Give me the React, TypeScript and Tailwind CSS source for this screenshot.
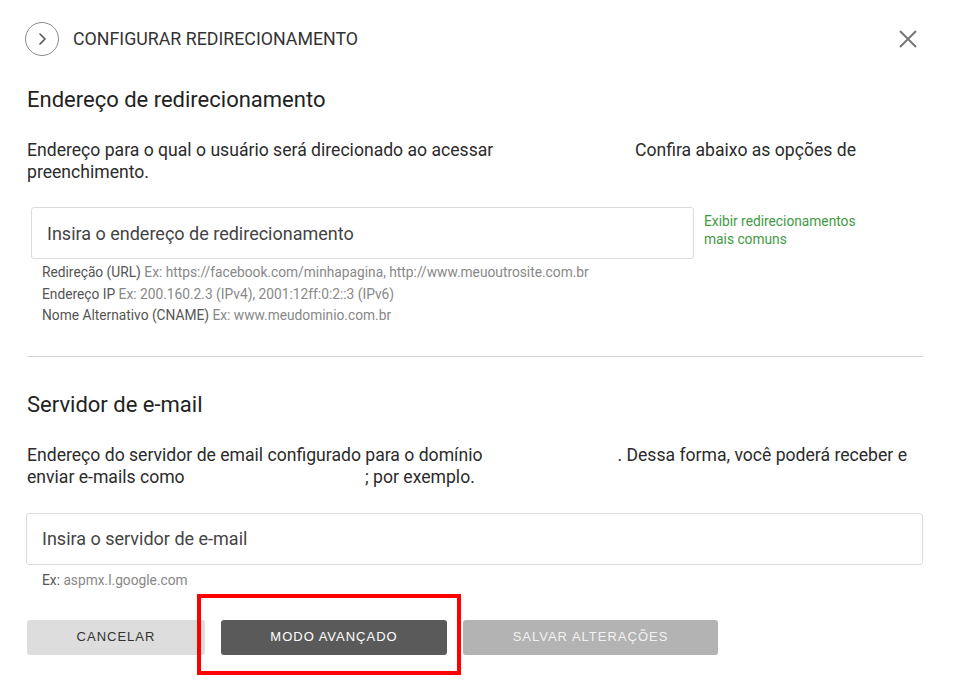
export default function App() {
  return (
    <div className="min-h-screen w-full bg-white font-['Roboto',sans-serif] text-[#333]">
      <div className="pl-[27px] pr-[34px]">
        <header className="flex items-center justify-between pt-[22px]">
          <div className="-ml-[2px] flex items-center">
            <span className="flex h-[34px] w-[34px] items-center justify-center rounded-full border border-[#8a8a8a]">
              <svg width="10" height="14" viewBox="0 0 10 14" fill="none">
                <polyline points="3,2 8,7 3,12" stroke="#555" strokeWidth="1.6" strokeLinecap="round" strokeLinejoin="round" />
              </svg>
            </span>
            <h1 className="ml-[14px] text-[17.8px] font-normal text-[#333]">CONFIGURAR REDIRECIONAMENTO</h1>
          </div>
          <button className="mr-[5px] flex h-[20px] w-[20px] items-center justify-center">
            <svg width="18" height="18" viewBox="0 0 18 18" fill="none">
              <path d="M1 1L17 17M17 1L1 17" stroke="#777" strokeWidth="2" />
            </svg>
          </button>
        </header>

        <section>
          <h2 className="mt-[30px] text-[22px] leading-[28px] font-normal text-[#222]">Endereço de redirecionamento</h2>
          <p className="mt-[25px] text-[17.6px] leading-[22px] text-[#2b2b2b]">
            Endereço para o qual o usuário será direcionado ao acessar <span className="inline-block w-[133px]" /> Confira abaixo as opções de preenchimento.
          </p>

          <div className="mt-[24px] flex items-start">
            <div className="ml-[4px] flex h-[52px] w-[663px] items-center rounded-[3px] border border-[#dcdcdc] pl-[15px] text-[18px] text-[#444]">
              Insira o endereço de redirecionamento
            </div>
            <a className="ml-[10px] mt-[5px] w-[170px] text-[13.75px] leading-[18px] text-[#3f9a44]">
              Exibir redirecionamentos mais comuns
            </a>
          </div>

          <div className="mt-[3px] pl-[15px] text-[13.75px] leading-[21.5px] text-[#888]">
            <p><span className="text-[#555]">Redireção (URL)</span> Ex: https://facebook.com/minhapagina, http://www.meuoutrosite.com.br</p>
            <p><span className="text-[#555]">Endereço IP</span> Ex: 200.160.2.3 (IPv4), 2001:12ff:0:2::3 (IPv6)</p>
            <p><span className="text-[#555]">Nome Alternativo (CNAME)</span> Ex: www.meudominio.com.br</p>
          </div>
        </section>

        <hr className="mt-[29px] border-t border-[#d6d6d6]" />

        <section>
          <h2 className="mt-[34px] text-[22px] leading-[28px] font-normal text-[#222]">Servidor de e-mail</h2>
          <p className="mt-[25px] text-[17.6px] leading-[22px] text-[#2b2b2b]">
            Endereço do servidor de email configurado para o domínio<span className="inline-block w-[135px]" />. Dessa forma, você poderá receber e enviar e-mails como <span className="inline-block w-[176px]" />; por exemplo.
          </p>
          <div className="-ml-[1px] mt-[25px] flex h-[52px] items-center rounded-[3px] border border-[#dcdcdc] pl-[15px] text-[18px] text-[#444]">
            Insira o servidor de e-mail
          </div>
          <p className="mt-[6px] pl-[15px] text-[13.75px] leading-[18px] text-[#888]">
            <span className="text-[#555]">Ex:</span> aspmx.l.google.com
          </p>
        </section>

        <div className="mt-[31px] flex gap-[16px] font-['Liberation_Sans',Arial,sans-serif] text-[13px] tracking-[1px]">
          <button className="h-[35px] w-[178px] rounded-[3px] bg-[#dddddd] text-[#333]">CANCELAR</button>
          <div className="relative">
            <button className="h-[35px] w-[226px] rounded-[3px] bg-[#5a5a5a] text-white">MODO AVANÇADO</button>
            <span className="pointer-events-none absolute -top-[26px] -right-[14px] -bottom-[20px] -left-[24px] border-[4px] border-[#ff0000]" />
          </div>
          <button className="h-[35px] w-[255px] rounded-[3px] bg-[#b3b3b3] text-[#f2f2f2]">SALVAR ALTERAÇÕES</button>
        </div>
      </div>
    </div>
  );
}
